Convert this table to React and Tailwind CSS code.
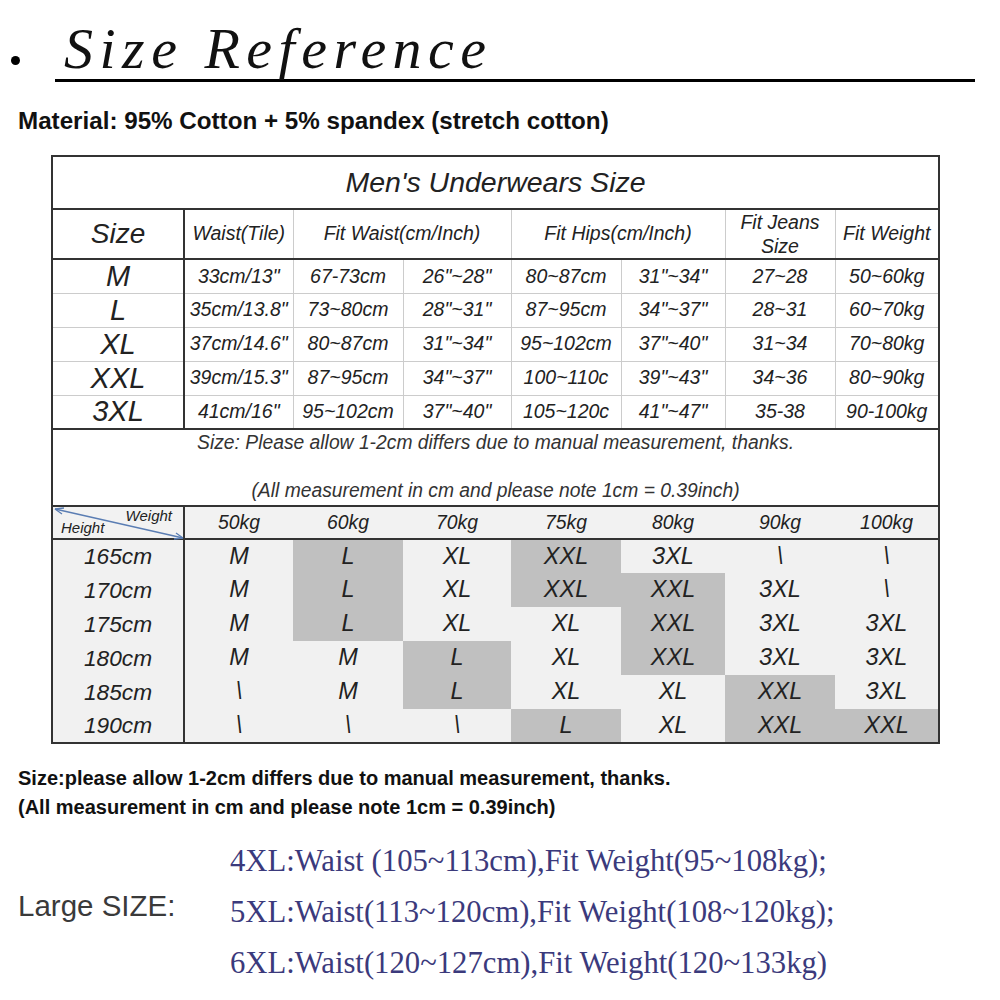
import React from "react";

const sans = { fontFamily: '"Liberation Sans", Arial, sans-serif' };
const serif = { fontFamily: '"Liberation Serif", "Times New Roman", serif' };

const sizeRows = [
  ["M", "33cm/13\"", "67-73cm", "26\"~28\"", "80~87cm", "31\"~34\"", "27~28", "50~60kg"],
  ["L", "35cm/13.8\"", "73~80cm", "28\"~31\"", "87~95cm", "34\"~37\"", "28~31", "60~70kg"],
  ["XL", "37cm/14.6\"", "80~87cm", "31\"~34\"", "95~102cm", "37\"~40\"", "31~34", "70~80kg"],
  ["XXL", "39cm/15.3\"", "87~95cm", "34\"~37\"", "100~110c", "39\"~43\"", "34~36", "80~90kg"],
  ["3XL", "41cm/16\"", "95~102cm", "37\"~40\"", "105~120c", "41\"~47\"", "35-38", "90-100kg"],
];

const weights = ["50kg", "60kg", "70kg", "75kg", "80kg", "90kg", "100kg"];

// [label, cells], a "*" prefix marks a shaded cell
const fitRows = [
  ["165cm", ["M", "*L", "XL", "*XXL", "3XL", "\\", "\\"]],
  ["170cm", ["M", "*L", "XL", "*XXL", "*XXL", "3XL", "\\"]],
  ["175cm", ["M", "*L", "XL", "XL", "*XXL", "3XL", "3XL"]],
  ["180cm", ["M", "M", "*L", "XL", "*XXL", "3XL", "3XL"]],
  ["185cm", ["\\", "M", "*L", "XL", "XL", "*XXL", "3XL"]],
  ["190cm", ["\\", "\\", "\\", "*L", "XL", "*XXL", "*XXL"]],
];

const colWidths = [132, 109, 110, 108, 110, 104, 110, 104];

function DiagonalCell() {
  return (
    <td className="relative border-r-2 border-b-2 border-[#333] bg-[#f2f2f2] p-0">
      <svg className="absolute inset-0" width="132" height="33" viewBox="0 0 132 33">
        <line x1="2" y1="2" x2="130" y2="31" stroke="#5a7db3" strokeWidth="1.3" />
        <path d="M2 2 L11 1 M2 2 L9 7" stroke="#5a7db3" strokeWidth="1.3" fill="none" />
        <path d="M130 31 L121 32 M130 31 L123 26" stroke="#5a7db3" strokeWidth="1.3" fill="none" />
      </svg>
      <span className="absolute right-[11px] top-[0px] text-[15px] italic leading-[18px] text-[#222]">Weight</span>
      <span className="absolute left-[8px] bottom-[1px] text-[15px] italic leading-[18px] text-[#222]">Height</span>
    </td>
  );
}

export default function App() {
  return (
    <div className="w-[1000px] h-[1000px] bg-white text-[#111] overflow-hidden" style={sans}>
      {/* Title */}
      <div className="flex items-end h-[72px] pl-[11px]">
        <span className="mb-[7px] block h-[9px] w-[9px] shrink-0 rounded-full bg-black"></span>
        <span className="ml-[44px] text-[58px] italic leading-[0.8] tracking-[6.5px] text-[#111]" style={serif}>
          Size Reference
        </span>
      </div>
      <div className="ml-[55px] mt-[7px] h-[3px] w-[920px] bg-black"></div>

      <div className="ml-[18px] mt-[27px] text-[24.2px] font-bold leading-none text-[#111]">
        Material: 95% Cotton + 5% spandex (stretch cotton)
      </div>

      {/* Size table */}
      <table className="ml-[51px] mt-[22px] w-[887px] table-fixed border-collapse border-2 border-[#333] italic text-[#222]">
        <colgroup>
          {colWidths.map((w, i) => (
            <col key={i} style={{ width: w }} />
          ))}
        </colgroup>
        <tbody>
          <tr className="h-[53px]">
            <td colSpan={8} className="border-b-2 border-[#333] text-center text-[28.5px] leading-none">
              Men's Underwears Size
            </td>
          </tr>
          <tr className="h-[49px] text-[19.5px] text-center leading-none">
            <td className="border-r-2 border-b-2 border-[#333] text-[28px]">Size</td>
            <td className="border-r border-b-2 border-r-[#ccc] border-b-[#333]">Waist(Tile)</td>
            <td colSpan={2} className="border-r border-b-2 border-r-[#ccc] border-b-[#333]">Fit Waist(cm/Inch)</td>
            <td colSpan={2} className="border-r border-b-2 border-r-[#ccc] border-b-[#333]">Fit Hips(cm/Inch)</td>
            <td className="border-r border-b-2 border-r-[#ccc] border-b-[#333] leading-[24px]">
              Fit Jeans
              <br />
              Size
            </td>
            <td className="border-b-2 border-[#333]">Fit Weight</td>
          </tr>
          {sizeRows.map((row, r) => (
            <tr key={r} className="h-[34px] text-center text-[19.5px]">
              {row.map((cell, c) => (
                <td
                  key={c}
                  className={
                    c === 0
                      ? "border-r-2 border-r-[#333] border-b border-b-[#ccc] text-[29px] leading-none"
                      : "border-r border-b border-[#ccc] leading-none"
                  }
                >
                  {cell}
                </td>
              ))}
            </tr>
          ))}
          <tr className="h-[77px]">
            <td colSpan={8} className="border-t-2 border-[#333] text-center align-top text-[19.3px] leading-[22px] text-[#333]">
              <div className="mt-[2px]">Size: Please allow 1-2cm differs due to manual measurement, thanks.</div>
              <div className="mt-[26px]">(All measurement in cm and please note 1cm = 0.39inch)</div>
            </td>
          </tr>
          <tr className="h-[33px] border-t-2 border-[#333] text-center text-[19.4px]">
            <DiagonalCell />
            {weights.map((w) => (
              <td key={w} className="border-b-2 border-[#333] bg-[#f2f2f2] leading-none">
                {w}
              </td>
            ))}
          </tr>
          {fitRows.map(([label, cells]) => (
            <tr key={label} className="h-[34px] text-center text-[23.5px]">
              <td className="border-r-2 border-[#333] bg-[#f1f1f1] text-[22.7px] leading-none">{label}</td>
              {cells.map((cell, c) => {
                const shaded = cell.startsWith("*");
                return (
                  <td key={c} className={(shaded ? "bg-[#c0c0c0]" : "bg-[#f1f1f1]") + " leading-none"}>
                    {shaded ? cell.slice(1) : cell}
                  </td>
                );
              })}
            </tr>
          ))}
        </tbody>
      </table>

      {/* Notes */}
      <div className="ml-[18px] mt-[20px] text-[20px] font-bold leading-[29px] text-[#111]">
        <div>Size:please allow 1-2cm differs due to manual measurement, thanks.</div>
        <div>(All measurement in cm and please note 1cm = 0.39inch)</div>
      </div>

      {/* Large sizes */}
      <div className="mt-[14px] flex items-start">
        <div className="ml-[18px] mt-[53px] w-[212px] text-[29.5px] leading-[34px] text-[#3a3a3a]">Large SIZE:</div>
        <div className="flex flex-col text-[30.7px] leading-[51px] text-[#3b3a7c]" style={serif}>
          <div>4XL:Waist (105~113cm),Fit Weight(95~108kg);</div>
          <div>5XL:Waist(113~120cm),Fit Weight(108~120kg);</div>
          <div>6XL:Waist(120~127cm),Fit Weight(120~133kg)</div>
        </div>
      </div>
    </div>
  );
}
